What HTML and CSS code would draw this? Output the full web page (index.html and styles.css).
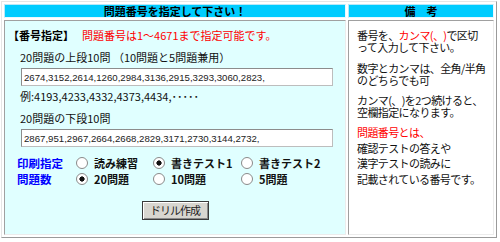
FILE: index.html
```html
<!DOCTYPE html>
<html lang="ja">
<head>
<meta charset="utf-8">
<title>問題番号指定</title>
<link rel="stylesheet" href="styles.css">
</head>
<body>
<table class="frame">
  <tr>
    <th class="hd hd-left">問題番号を指定して下さい！</th>
    <th class="hd hd-right">備　考</th>
  </tr>
  <tr>
    <td class="main">
      <div class="main-in">
        <p class="spec"><b class="spec-label">【番号指定】</b><span class="red spec-note">問題番号は1〜4671まで指定可能です。</span></p>
        <p class="sub">20問題の上段10問 （10問題と5問題兼用）</p>
        <input class="nums" type="text" value="2674,3152,2614,1260,2984,3136,2915,3293,3060,2823,">
        <p class="eg">例:4193,4233,4332,4373,4434,･････</p>
        <p class="sub sub2">20問題の下段10問</p>
        <input class="nums" type="text" value="2867,951,2967,2664,2668,2829,3171,2730,3144,2732,">
        <div class="opts">
          <span class="opt-label">印刷指定</span>
          <label class="opt"><input class="radio" type="radio" name="mode"><span>読み練習</span></label>
          <label class="opt"><input class="radio" type="radio" name="mode" checked><span>書きテスト1</span></label>
          <label class="opt"><input class="radio" type="radio" name="mode"><span>書きテスト2</span></label>
          <span class="opt-label">問題数</span>
          <label class="opt"><input class="radio" type="radio" name="count" checked><span>20問題</span></label>
          <label class="opt"><input class="radio" type="radio" name="count"><span>10問題</span></label>
          <label class="opt"><input class="radio" type="radio" name="count"><span>5問題</span></label>
        </div>
        <div class="btn-row"><button class="btn" type="button">ドリル作成</button></div>
      </div>
    </td>
    <td class="note">
      <div class="np np1">
        <span class="ln">番号を、<span class="red">カンマ(、)</span>で区切</span>
        <span class="ln">って入力して下さい。</span>
      </div>
      <div class="np np2">
        <span class="ln">数字とカンマは、全角/半角</span>
        <span class="ln">のどちらでも可</span>
      </div>
      <div class="np np3">
        <span class="ln">カンマ(、)を2つ続けると、</span>
        <span class="ln">空欄指定になります。</span>
      </div>
      <div class="np np4">
        <span class="ln red">問題番号とは、</span>
        <span class="ln">確認テストの答えや</span>
        <span class="ln">漢字テストの読みに</span>
        <span class="ln">記載されている番号です。</span>
      </div>
    </td>
  </tr>
</table>
</body>
</html>
```

FILE: styles.css
```css
html, body {
  margin: 0;
  padding: 0;
  background: #ffffff;
}
body {
  font-family: "Noto Sans CJK JP", "Noto Sans", sans-serif;
  color: #111;
  font-size: 11px;
  text-spacing-trim: space-all;
}
p { margin: 0; }

.frame {
  margin: 1px 0 0 1px;
  border: 1px solid;
  border-color: #e6e6e6 #9a9a9a #9a9a9a #e6e6e6;
  border-spacing: 2px;
  border-collapse: separate;
  table-layout: fixed;
  width: 496px;
}
.hd {
  height: 12px;
  padding: 0;
  background: #00ccff;
  border: 1px solid;
  border-color: #b8e8f8 #e8f8ff #e8f8ff #b8e8f8;
  font-size: 11px;
  font-weight: bold;
  line-height: 12px;
  color: #000;
  text-align: center;
  white-space: nowrap;
  overflow: hidden;
}
.hd-left { width: 340px; }
.hd-right { width: 144px; }

.main, .note {
  height: 213px;
  padding: 0;
  vertical-align: top;
  border: 1px solid;
  border-color: #a0a0a0 #ececec #ececec #a0a0a0;
}
.main { background: #e0ffff; }
.note { background: #ffffff; }

.main-in { padding-top: 7px; }
.spec {
  line-height: 14px;
  padding-left: 3px;
  white-space: nowrap;
}
.spec-label { font-weight: bold; color: #000; }
.spec-note { margin-left: 8px; }
.red { color: #ff0000; }

.sub {
  margin-top: 8px;
  padding-left: 15px;
  line-height: 14px;
  white-space: nowrap;
}
.nums {
  display: block;
  box-sizing: border-box;
  margin: 4px 0 0 16px;
  width: 312px;
  height: 18px;
  padding: 0 2px;
  border: 1px solid;
  border-color: #8c8c8c #bdbdbd #bdbdbd #8c8c8c;
  background: #fff;
  font-family: "Liberation Sans", Arial, sans-serif;
  font-size: 9.65px;
  color: #222;
  outline: none;
}
.eg {
  margin-top: 3px;
  padding-left: 15px;
  line-height: 14px;
  white-space: nowrap;
}
.opts {
  margin-top: 8px;
  padding-left: 12px;
  display: grid;
  grid-template-columns: 59px 77px 88px 1fr;
  grid-auto-rows: 16px;
  align-items: center;
}
.opt-label {
  color: #0000ff;
  font-weight: bold;
  font-size: 11.5px;
  line-height: 16px;
  white-space: nowrap;
}
.opt {
  display: flex;
  align-items: center;
  gap: 6px;
  font-weight: bold;
  font-size: 11px;
  line-height: 16px;
  white-space: nowrap;
  color: #111;
}
.radio {
  appearance: none;
  -webkit-appearance: none;
  margin: 0;
  width: 12px;
  height: 12px;
  border: 1px solid #8a8a8a;
  border-radius: 50%;
  background: #fff;
  flex: none;
}
.radio:checked {
  background: radial-gradient(circle, #111 0 2.3px, #fff 2.9px);
}
.btn-row {
  margin-top: 14px;
  display: flex;
  justify-content: center;
}
.btn {
  box-sizing: border-box;
  width: 67px;
  height: 19px;
  padding: 0;
  border: 1px solid #3a3a3a;
  background: #d8d6d0;
  box-shadow: inset 1px 1px #ffffff, inset -1px -1px #8a8a8a;
  font-family: "Noto Sans CJK JP", sans-serif;
  font-size: 11px;
  letter-spacing: -1px;
  line-height: 17px;
  color: #222;
}

.note { padding-top: 8px; padding-left: 8px; height: 205px; width: 136px; }
.np {
  font-size: 11px;
  letter-spacing: -0.6px;
  color: #111;
}
.ln {
  display: block;
  height: 12px;
  line-height: 12px;
  white-space: nowrap;
}
.np2 { margin-top: 9px; }
.np3 { margin-top: 8px; }
.np4 { margin-top: 7px; }
.np4 .ln { height: 15.5px; line-height: 15.5px; }
```
